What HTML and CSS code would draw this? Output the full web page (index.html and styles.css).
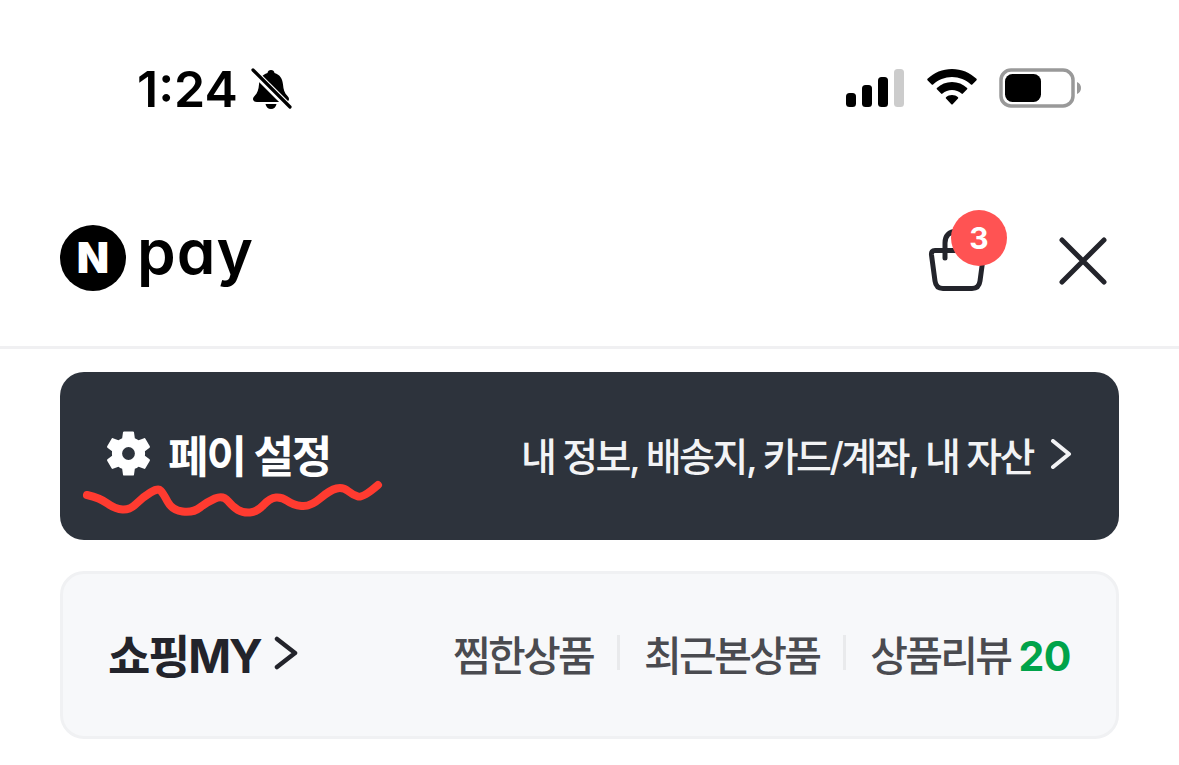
FILE: index.html
```html
<!DOCTYPE html>
<html lang="ko">
<head>
    <meta charset="UTF-8">
    <title>네이버페이</title>
    <meta name="viewport" content="width=device-width, initial-scale=1">
    <link rel="stylesheet" href="styles.css">
</head>
<body>
    <div class="status-bar">
        <div class="status-left">
            <span class="time">1:24</span>
            <svg class="bell" width="42" height="42" viewBox="0 0 42 42">
                <path d="M21 2c2 0 3.200 1.200 3.500 3 5.500 1.500 8 6 8.500 11.500.4 5 1.500 8.500 4.500 11.500 1.500 1.500 2 3 1 4.500-.6 1-1.800 1.500-3.500 1.500H7c-1.700 0-2.900-.5-3.500-1.500-1-1.500-.5-3 1-4.500 3-3 4.100-6.500 4.500-11.500.5-5.500 3-10 8.500-11.500.3-1.800 1.500-3 3.500-3z" fill="#000"/>
                <path d="M15.500 36h11c-.5 3-2.700 5-5.500 5s-5-2-5.500-5z" fill="#000"/>
                <path d="M2 2l38 38" stroke="#fff" stroke-width="7"/>
                <path d="M3 2l37 37" stroke="#000" stroke-width="3.200" stroke-linecap="round"/>
            </svg>
        </div>
        <div class="status-right">
            <svg width="60" height="38" viewBox="0 0 60 38">
                <rect x="1" y="24" width="10" height="14" rx="3.500" fill="#000"/>
                <rect x="17" y="16" width="10" height="22" rx="3.500" fill="#000"/>
                <rect x="33" y="8" width="10" height="30" rx="3.500" fill="#000"/>
                <rect x="49" y="0" width="10" height="38" rx="3.500" fill="#ccc"/>
            </svg>
            <svg width="52" height="38" viewBox="0 0 52 38">
                <path d="M26 0c9.500 0 18 3.700 24.500 9.800.4.400.4 1 0 1.400l-4.200 4.300c-.4.400-1 .4-1.400 0C39.800 10.800 33.200 8 26 8S12.200 10.800 7.100 15.500c-.4.400-1 .4-1.400 0L1.500 11.200c-.4-.4-.4-1 0-1.400C8 3.700 16.500 0 26 0z" fill="#000"/>
                <path d="M26 13c5.800 0 11 2.200 15.100 5.900.4.400.4 1 0 1.400l-4.200 4.300c-.4.400-1 .4-1.400 0-2.600-2.200-5.900-3.600-9.500-3.600s-6.900 1.400-9.500 3.600c-.4.400-1 .4-1.400 0l-4.200-4.300c-.4-.4-.4-1 0-1.400C15 15.200 20.200 13 26 13z" fill="#000"/>
                <path d="M26 26c2.300 0 4.400.8 6 2.200.4.400.4 1 0 1.400l-5.300 5.600c-.4.400-1 .4-1.400 0L20 29.600c-.4-.4-.4-1 0-1.400 1.600-1.400 3.700-2.200 6-2.200z" fill="#000"/>
            </svg>
            <svg width="84" height="40" viewBox="0 0 84 40">
                <rect x="2" y="2" width="72" height="36" rx="10" fill="none" stroke="#999" stroke-width="3.500"/>
                <rect x="6" y="6" width="36" height="28" rx="7.500" fill="#000"/>
                <path d="M78 14c2.500 1 4 3.200 4 6s-1.500 5-4 6z" fill="#999"/>
            </svg>
        </div>
    </div>

    <header class="top-bar">
        <div class="logo">
            <svg width="66" height="66" viewBox="0 0 66 66">
                <circle cx="33" cy="33" r="33" fill="#000"/>
                <text x="33" y="48" class="logo-n" text-anchor="middle">N</text>
            </svg>
            <span class="logo-pay">pay</span>
        </div>
        <div class="top-actions">
            <div class="cart">
                <svg width="60" height="64" viewBox="0 0 60 64">
                    <path d="M8 22.500H52Q57 22.500 56.500 27L53 53Q52 60.500 45 60.500H16Q9 60.500 8 53L4.500 27Q4 22.500 8 22.500z" fill="none" stroke="#23242b" stroke-width="5" stroke-linejoin="round"/>
                    <path d="M18 30V15Q18 4 30 3" fill="none" stroke="#23242b" stroke-width="5" stroke-linecap="round"/>
                </svg>
                <span class="badge">3</span>
            </div>
            <svg class="close" width="50" height="50" viewBox="0 0 50 50">
                <path d="M4 4l42 42M46 4L4 46" stroke="#23242b" stroke-width="5" stroke-linecap="round"/>
            </svg>
        </div>
    </header>

    <main class="content">
        <section class="card card-dark">
            <div class="card-title">
                <svg class="gear" width="53" height="53" viewBox="0 0 24 24">
                    <path fill="#fff" fill-rule="evenodd" d="M19.430 12.980c.04-.32.070-.640.070-.980s-.030-.660-.070-.980l2.110-1.650c.190-.150.240-.420.120-.640l-2-3.460c-.120-.220-.390-.300-.610-.220l-2.490 1c-.520-.400-1.080-.730-1.690-.980l-.380-2.650C14.460 2.180 14.250 2 14 2h-4c-.250 0-.460.180-.490.420l-.380 2.650c-.610.250-1.170.590-1.690.980l-2.490-1c-.230-.090-.490 0-.610.220l-2 3.460c-.130.220-.070.490.120.640l2.110 1.650c-.040.320-.070.650-.070.980s.030.660.070.980l-2.110 1.650c-.190.150-.240.420-.120.640l2 3.460c.120.220.390.300.610.220l2.490-1c.520.400 1.080.730 1.690.980l.380 2.650c.030.240.240.420.490.420h4c.250 0 .460-.180.490-.420l.380-2.650c.610-.250 1.170-.590 1.690-.980l2.490 1c.230.090.490 0 .610-.220l2-3.460c.120-.220.070-.490-.120-.640l-2.110-1.650zM12 14.900a2.900 2.900 0 1 1 0-5.800 2.900 2.900 0 0 1 0 5.800z"/>
                </svg>
                <span>페이 설정</span>
            </div>
            <div class="card-links">
                <span>내 정보, 배송지, 카드/계좌, 내 자산</span>
                <svg class="chevron" width="22" height="30" viewBox="0 0 22 30">
                    <path d="M3 2l16 13L3 28" fill="none" stroke="#f2f3f5" stroke-width="4" stroke-linecap="round" stroke-linejoin="round"/>
                </svg>
            </div>
            <svg class="scribble" width="304" height="40" viewBox="0 0 304 40">
                <path d="M6 15Q19 18 26.500 23.500Q34 29 41.500 29.500Q49 30 55.500 23.500Q62 17 69.500 12.500Q77 8 79.500 10.500Q82 13 86.500 21.500Q91 30 101.500 31.500Q112 33 119 27.500Q126 22 134 18.500Q142 15 147 21Q152 27 157 30Q162 33 169 32.500Q176 32 182.500 25Q189 18 195 17.500Q201 17 206.500 21Q212 25 220.500 26Q229 27 239 18.500Q249 10 255.500 8.500Q262 7 267 11Q272 15 277 16.500Q282 18 297 5" fill="none" stroke="#ff3b30" stroke-width="8" stroke-linecap="round" stroke-linejoin="round"/>
            </svg>
        </section>

        <section class="card card-light">
            <div class="card-title">
                <span>쇼핑MY</span>
                <svg width="24" height="34" viewBox="0 0 24 34">
                    <path d="M3 3l18 14L3 31" fill="none" stroke="#23242b" stroke-width="4.500" stroke-linecap="round" stroke-linejoin="round"/>
                </svg>
            </div>
            <div class="shop-links">
                <span>찜한상품</span>
                <i class="divider"></i>
                <span>최근본상품</span>
                <i class="divider"></i>
                <span>상품리뷰 <b class="count">20</b></span>
            </div>
        </section>
    </main>
</body>
</html>
```

FILE: styles.css
```css
body {
    font-family: Inter, "Noto Sans CJK KR", sans-serif;
    margin: 0;
    background: #fff;
    color: #23242b;
    height: 765px;
    overflow: hidden;
}
.status-bar {
    height: 175px;
    box-sizing: border-box;
    padding: 62px 96px 0 137px;
    display: flex;
    justify-content: space-between;
    align-items: flex-start;
}
.status-left {
    display: flex;
    align-items: center;
    gap: 12px;
}
.time {
    font-size: 50px;
    line-height: 54px;
    font-weight: 600;
    color: #000;
}
.status-right {
    display: flex;
    align-items: center;
    gap: 21px;
    padding-top: 6px;
}
.top-bar {
    height: 174px;
    box-sizing: border-box;
    border-bottom: 3px solid #f0f0f2;
    padding: 50px 71px 0 60px;
    display: flex;
    justify-content: space-between;
    align-items: flex-start;
}
.logo {
    display: flex;
    align-items: flex-start;
    gap: 11px;
}
.logo-n {
    font-family: Inter, sans-serif;
    font-size: 42px;
    font-weight: 900;
    fill: #fff;
}
.logo-pay {
    display: block;
    margin-top: -6px;
    font-size: 62px;
    line-height: 66px;
    font-weight: 600;
    color: #000;
    font-feature-settings: "cv11";
    letter-spacing: 1px;
}
.top-actions {
    display: flex;
    align-items: flex-start;
    gap: 71px;
}
.cart {
    position: relative;
    width: 60px;
    height: 64px;
    margin-top: 3px;
}
.close {
    margin-top: 11px;
}
.badge {
    position: absolute;
    left: 24px;
    top: -18px;
    width: 56px;
    height: 56px;
    border-radius: 50%;
    background: #ff5353;
    color: #fff;
    font-size: 30px;
    font-weight: 700;
    display: flex;
    align-items: center;
    justify-content: center;
}
.content {
    padding: 23px 60px 0;
    display: flex;
    flex-direction: column;
    gap: 31px;
}
.card {
    position: relative;
    box-sizing: border-box;
    height: 168px;
    padding: 0 47px 5px;
    border-radius: 24px;
    display: flex;
    justify-content: space-between;
    align-items: center;
}
.card-dark {
    background: #2d333c;
    color: #fff;
}
.card-light {
    background: #f7f8fa;
    border: 3px solid #f0f1f3;
    padding: 0 45px 5px;
}
.card-title {
    display: flex;
    align-items: center;
    letter-spacing: -2px;
    font-weight: 700;
}
.card-dark .card-title {
    font-size: 44px;
    gap: 13px;
    color: #fff;
}
.gear {
    margin-left: -5px;
}
.card-light .card-title {
    font-size: 46px;
    letter-spacing: -2.2px;
    gap: 14px;
}
.card-links {
    display: flex;
    align-items: center;
    gap: 17px;
    font-size: 39px;
    font-weight: 500;
    letter-spacing: -2.5px;
    color: #f2f3f5;
}
.scribble {
    position: absolute;
    left: 21px;
    top: 108px;
}
.shop-links {
    display: flex;
    align-items: center;
    gap: 24px;
    font-size: 41px;
    letter-spacing: -2.7px;
    color: #4a4b50;
    font-weight: 500;
}
.divider {
    width: 3px;
    height: 35px;
    background: #e9eaec;
}
.count {
    color: #00a34a;
    font-weight: 700;
    letter-spacing: -0.5px;
}
```
